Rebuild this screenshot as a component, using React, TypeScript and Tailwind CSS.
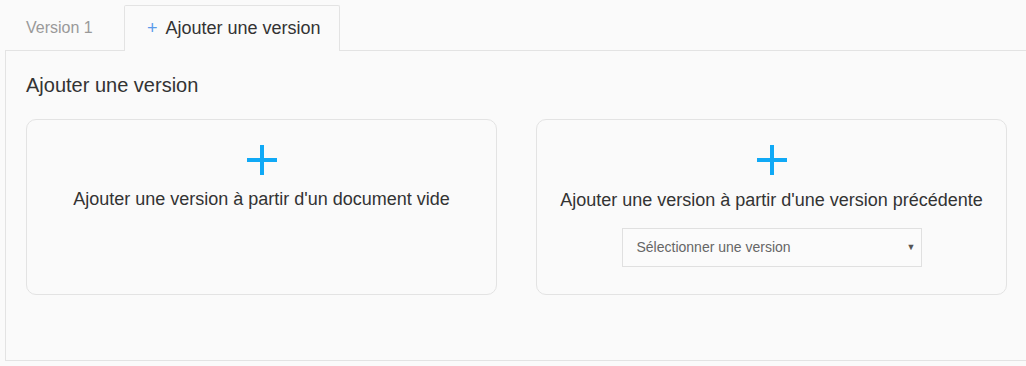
import React from 'react';

function PlusIcon() {
  return (
    <svg width="30" height="30" viewBox="0 0 30 30" className="block">
      <rect x="0" y="13" width="30" height="4" fill="#10a9f6" />
      <rect x="13" y="0" width="4" height="30" fill="#10a9f6" />
    </svg>
  );
}

export default function App() {
  return (
    <div
      className="h-[366px] w-[1026px] overflow-hidden bg-[#fafafa] text-[#333]"
      style={{ fontFamily: '"Liberation Sans", Arial, sans-serif' }}
    >
      <div className="w-[1023px] pl-[5px] pt-[5px]">
        {/* tabs */}
        <div className="relative z-10 flex h-[46px] items-stretch">
          <div className="flex w-[119px] items-center pb-[1px] pl-[21px] text-[16px] text-[#999]">
            Version 1
          </div>
          <div className="flex w-[216px] items-center gap-[8px] rounded-t-[2px] border border-b-0 border-[#e3e3e3] bg-[#fafafa] pb-[1px] pl-[22px] text-[18px] text-[#333]">
            <span className="text-[18px] leading-none text-[#5b9bea]">+</span>
            <span>Ajouter une version</span>
          </div>
        </div>

        {/* panel */}
        <div className="-mt-[1px] w-[1023px] border border-[#e3e3e3] bg-[#fafafa] px-[20px] pb-[65px] pt-[22px]">
          <h2 className="text-[20px] leading-[24px] text-[#333]">Ajouter une version</h2>

          <div className="mt-[22px] flex gap-[39px]">
            <div className="flex w-[471px] flex-col items-center rounded-[10px] border border-[#e3e3e3] pt-[25px]">
              <PlusIcon />
              <p className="mt-[13px] text-[18px] leading-[22px]">
                Ajouter une version à partir d'un document vide
              </p>
            </div>

            <div className="flex w-[471px] flex-col items-center rounded-[10px] border border-[#e3e3e3] pb-[27px] pt-[25px]">
              <PlusIcon />
              <p className="mt-[14px] text-[18px] leading-[22px]">
                Ajouter une version à partir d'une version précédente
              </p>
              <div className="mt-[17px] flex h-[39px] w-[300px] items-center justify-between border border-[#e0e0e0] bg-[#fbfbfb] pl-[14px] pr-[5px]">
                <span className="text-[14px] text-[#666]">Sélectionner une version</span>
                <span className="text-[9px] text-[#555]">▼</span>
              </div>
            </div>
          </div>
        </div>
      </div>
    </div>
  );
}
